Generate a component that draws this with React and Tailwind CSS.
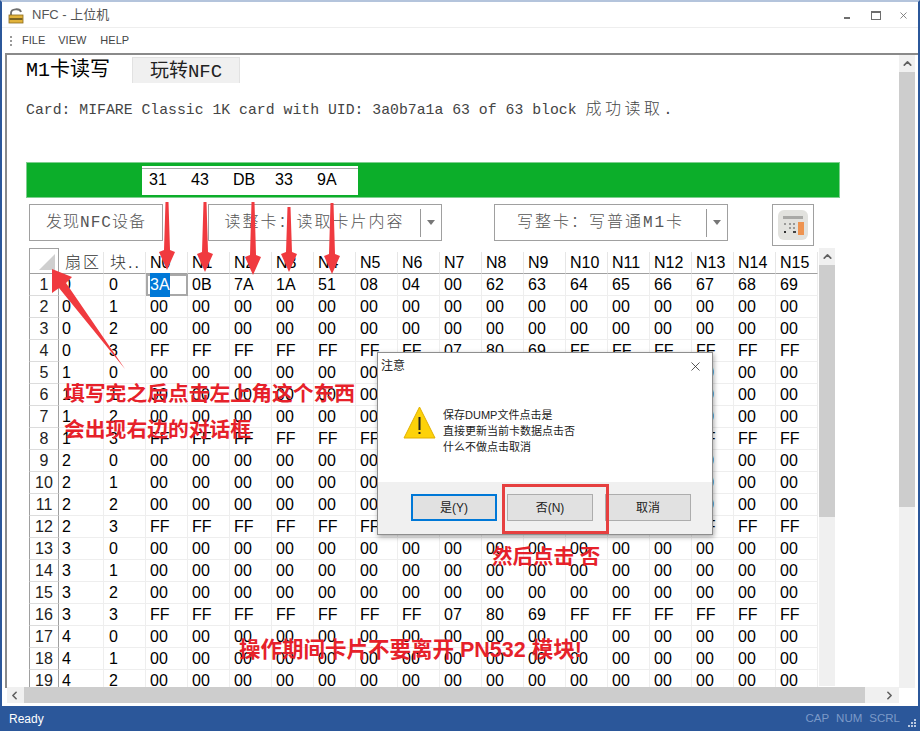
import React from 'react';
import { ChevronUp, ChevronLeft, ChevronRight, X } from 'lucide-react';

const CJK = "font-['Liberation_Sans','Noto_Sans_CJK_SC',sans-serif]";
const MONO = "font-['Liberation_Mono','Noto_Sans_CJK_SC',monospace]";

const COLUMNS = Array.from({ length: 16 }, (_, i) => `N${i}`);
const FIRST_ROW = ['3A', '0B', '7A', '1A', '51', '08', '04', '00', '62', '63', '64', '65', '66', '67', '68', '69'];
const TRAILER = ['FF', 'FF', 'FF', 'FF', 'FF', 'FF', 'FF', '07', '80', '69', 'FF', 'FF', 'FF', 'FF', 'FF', 'FF'];
const EMPTY = Array(16).fill('00');

const ROWS = Array.from({ length: 19 }, (_, i) => ({
  id: i + 1,
  sector: Math.floor(i / 4),
  block: i % 4,
  cells: i === 0 ? FIRST_ROW : i % 4 === 3 ? TRAILER : EMPTY,
}));

const ARROWS = [
  [165, 200, 268],
  [203, 200, 270],
  [251, 200, 273],
  [287, 205, 270],
  [330, 201, 272],
];

const LockIcon = () => (
  <svg width="16" height="17" viewBox="0 0 16 17" className="ml-[6px]">
    <path d="M3 8 V6 C3 1.5 12 1 13 5" fill="none" stroke="#6f6f6f" strokeWidth="1.8" />
    <rect x="1" y="8" width="14" height="8" fill="#e2b33c" stroke="#8a6a1c" strokeWidth="0.8" />
    <rect x="1.5" y="11" width="13" height="2" fill="#7a6322" />
  </svg>
);

const WindowButtons = () => (
  <div className="ml-auto flex items-center text-[#6e6e6e]">
    <div className="mt-[5px] h-[2px] w-[6px] bg-[#6e6e6e]" />
    <div className="ml-[21px] h-[9px] w-[10px] border border-t-2 border-[#6e6e6e]" />
    <X size={11} strokeWidth={1.8} className="ml-[17px] mr-[9px]" />
  </div>
);

const Combo = ({ label, className }) => (
  <div className={`flex h-[37px] w-[234px] items-center border border-[#a0a0a0] bg-white ${className}`}>
    <span className={`flex-1 text-center text-[16px] font-light tracking-[2px] text-[#555] ${MONO}`}>{label}</span>
    <div className="h-[28px] w-px bg-[#999]" />
    <div className="mx-[6px] h-0 w-0 border-x-[4px] border-t-[5px] border-x-transparent border-t-[#777]" />
  </div>
);

const CalcIcon = () => (
  <svg width="30" height="30" viewBox="0 0 30 30">
    <rect width="30" height="30" rx="6" fill="#e2e2de" />
    <rect x="5" y="6" width="20" height="3" fill="#a9a9a6" />
    <rect x="20" y="12" width="6" height="13" fill="#ee9350" />
    <g fill="#9a9a98">
      <rect x="6" y="13" width="2" height="2" />
      <rect x="11" y="13" width="2" height="2" />
      <rect x="15" y="13" width="2" height="2" />
      <rect x="11" y="17" width="2" height="2" />
      <rect x="15" y="17" width="2" height="2" />
    </g>
    <rect x="6" y="21" width="2" height="2" fill="#333" />
    <rect x="15" y="21" width="3" height="2" fill="#444" />
  </svg>
);

const HexGrid = () => (
  <div className="grid h-[440px] w-[789px] grid-cols-[30px_45px_42px_repeat(16,42px)] grid-rows-[26px] auto-rows-[22px] overflow-hidden text-[16px] text-black font-['Liberation_Sans','Noto_Sans_CJK_SC',sans-serif]">
    <div className="relative border border-[#a0a0a0]">
      <div className="absolute bottom-[3px] right-[3px] h-0 w-0 border-b-[16px] border-l-[16px] border-b-[#cfcfcf] border-l-transparent" />
    </div>
    <div className="mt-[4px] flex items-center border-b border-r border-[#a0a0a0] border-r-[#e6e6e6] pl-[6px] font-light tracking-[2px] text-[#333]">扇区</div>
    <div className="mt-[4px] flex items-center border-b border-r border-[#a0a0a0] border-r-[#e6e6e6] pl-[6px] font-light tracking-[2px] text-[#333]">块..</div>
    {COLUMNS.map((name) => (
      <div key={name} className="mt-[4px] flex items-center border-b border-r border-[#a0a0a0] border-r-[#e6e6e6] pl-[4px]">{name}</div>
    ))}
    {ROWS.map((row) => (
      <React.Fragment key={row.id}>
        <div className="flex items-center justify-center border-x border-b border-x-[#a0a0a0] border-b-[#dcdcdc] text-[#222]">{row.id}</div>
        <div className="flex items-center border-b border-r border-[#eeeeee] pl-[3px]">{row.sector}</div>
        <div className="flex items-center border-b border-r border-[#eeeeee] pl-[5px]">{row.block}</div>
        {row.cells.map((value, i) =>
          row.id === 1 && i === 0 ? (
            <div key={i} className="flex items-center border-2 border-[#a8a8a8] pl-[2px]">
              <span className="bg-[#0078d7] text-white">{value}</span>
            </div>
          ) : (
            <div key={i} className="flex items-center border-b border-r border-[#eeeeee] pl-[4px]">{value}</div>
          )
        )}
      </React.Fragment>
    ))}
  </div>
);

const Scrollbar = ({ thumb, className }) => (
  <div className={`flex w-[16px] flex-col bg-[#f0f0f0] ${className}`}>
    <div className="flex h-[17px] items-center justify-center">
      <ChevronUp size={13} strokeWidth={3} className="text-[#606060]" />
    </div>
    <div className={`bg-[#cdcdcd] ${thumb}`} />
  </div>
);

const DialogButton = ({ label, primary }) => (
  <button className={`h-[27px] w-[86px] bg-[#e1e1e1] text-[12px] text-[#222] ${primary ? 'border-2 border-[#0078d7]' : 'border border-[#adadad]'}`}>
    {label}
  </button>
);

const Dialog = () => (
  <div className={`absolute left-[375px] top-[350px] flex h-[183px] w-[336px] flex-col border border-[#8e8e8e] bg-white shadow-[1px_2px_5px_rgba(0,0,0,0.35)] ${CJK}`}>
    <div className="flex h-[26px] items-center justify-between pl-[3px] pr-[9px] text-[12px] text-[#222]">
      注意
      <X size={15} strokeWidth={1.2} className="text-[#222]" />
    </div>
    <div className="flex flex-1 items-start pl-[25px] pt-[27px]">
      <svg width="33" height="33" viewBox="0 0 33 33">
        <path d="M16.5 1 L32 32 H1 Z" fill="#fdd20a" stroke="#e2b100" strokeWidth="1" strokeLinejoin="round" />
        <rect x="15.5" y="11" width="2" height="13" fill="#222" />
        <rect x="15.5" y="26" width="2" height="2" fill="#222" />
      </svg>
      <div className="ml-[7px] mt-[1px] text-[11px] leading-[16px] text-[#222]">
        <div>保存DUMP文件点击是</div>
        <div>直接更新当前卡数据点击否</div>
        <div>什么不做点击取消</div>
      </div>
    </div>
    <div className="flex h-[52px] items-start gap-[10px] bg-[#f0f0f0] pl-[33px] pt-[12px]">
      <DialogButton label="是(Y)" primary />
      <DialogButton label="否(N)" />
      <div className="ml-[2px]">
        <DialogButton label="取消" />
      </div>
    </div>
  </div>
);

const Note = ({ className, children }) => (
  <div className={`absolute whitespace-nowrap font-bold leading-[26px] text-[#e6212a] ${CJK} ${className}`}>{children}</div>
);

const Annotations = () => (
  <>
    <svg width="920" height="731" className="pointer-events-none absolute left-0 top-0">
      <g fill="#f03a3f">
        {ARROWS.map(([x, from, tip]) => (
          <path key={x} d={`M${x - 1.5} ${from} H${x + 1.5} L${x + 3} ${tip - 20} L${x + 8} ${tip - 18} L${x} ${tip} L${x - 8} ${tip - 18} L${x - 3} ${tip - 20} Z`} />
        ))}
        <path d="M50 267 L70 275 L64 281 L123 367 L57 286 L50 291 Z" />
      </g>
    </svg>
    <Note className="left-[62px] top-[379px] text-[20.8px]">填写完之后点击左上角这个东西</Note>
    <Note className="left-[62px] top-[415px] text-[20.8px]">会出现右边的对话框</Note>
    <Note className="left-[490px] top-[542px] text-[20.5px]">然后点击 否</Note>
    <Note className="left-[237px] top-[635px] text-[21.5px]">操作期间卡片不要离开 PN532 模块!</Note>
    <div className="absolute left-[500px] top-[482px] h-[50px] w-[107px] border-[3px] border-[#e64040]" />
  </>
);

export default function App() {
  return (
    <div className="relative flex h-[731px] w-[920px] flex-col overflow-hidden border-x-2 border-t-2 border-x-[#2b579a] border-t-[#b4c4dc] bg-white">
      <div className={`flex h-[26px] items-center border-b border-[#eeeeee] pt-px text-[13px] text-[#555] ${CJK}`}>
        <LockIcon />
        <span className="ml-[8px]">NFC - 上位机</span>
        <WindowButtons />
      </div>

      <div className="flex h-[25px] items-center text-[11px] text-[#444] font-['Liberation_Sans',sans-serif]">
        <div className="ml-[8px] flex flex-col gap-[2px]">
          <div className="h-[2px] w-[2px] bg-[#999]" />
          <div className="h-[2px] w-[2px] bg-[#999]" />
          <div className="h-[2px] w-[2px] bg-[#999]" />
        </div>
        <span className="ml-[10px]">FILE</span>
        <span className="ml-[13px]">VIEW</span>
        <span className="ml-[14px]">HELP</span>
      </div>

      <div className="ml-[3px] flex h-[635px] border-l-2 border-t-2 border-[#8a8a8a]">
        <div className="w-[892px]">
          <div className="flex h-[28px] items-end">
            <div className={`h-[28px] w-[125px] pl-[19px] text-[20px] leading-[32px] text-black ${MONO}`}>M1卡读写</div>
            <div className={`h-[26px] w-[108px] border-x border-t border-[#e2e2e2] bg-[#f0f0f0] text-center text-[19px] leading-[28px] text-[#222] ${MONO}`}>玩转NFC</div>
          </div>

          <div className={`ml-[19px] mt-[17px] h-[20px] text-[14.8px] leading-[20px] text-[#444] ${MONO}`}>
            Card: MIFARE Classic 1K card with UID: 3a0b7a1a 63 of 63 block <span className="text-[16px] font-light tracking-[3.5px]">成功读取</span>.
          </div>

          <div className="ml-[19px] mt-[42px] flex h-[36px] w-[814px] items-center border border-[#7fcf8f] bg-[#0cae2a] pl-[115px]">
            <div className="flex h-[29px] w-[216px] items-center border-y-2 border-white bg-white pl-[3px] text-[16px] text-black font-['Liberation_Sans',sans-serif] shadow-[inset_0_1px_0_#a8a8a8]">
              {['31', '43', 'DB', '33', '9A'].map((value) => (
                <div key={value} className="w-[42px] pl-[4px]">{value}</div>
              ))}
            </div>
          </div>

          <div className="ml-[22px] mt-[6px] flex h-[44px] items-start">
            <div className={`flex h-[37px] w-[134px] items-center justify-center border border-[#a0a0a0] text-[16px] font-light tracking-[1px] text-[#555] ${MONO}`}>发现NFC设备</div>
            <Combo label="读整卡：读取卡片内容" className="ml-[45px]" />
            <Combo label="写整卡：写普通M1卡" className="ml-[52px]" />
            <div className="ml-[44px] flex h-[42px] w-[42px] items-center justify-center border border-[#a0a0a0]">
              <CalcIcon />
            </div>
          </div>

          <div className="ml-[22px] flex h-[440px]">
            <HexGrid />
            <Scrollbar thumb="h-[252px]" className="ml-px h-[438px]" />
          </div>
        </div>

        <Scrollbar thumb="h-[435px]" className="h-[633px]" />
      </div>

      <div className="-mt-px ml-[5px] flex h-[16px] w-[892px] items-center bg-[#f0f0f0]">
        <ChevronLeft size={13} strokeWidth={3} className="ml-[1px] text-[#606060]" />
        <div className="ml-[3px] h-[16px] w-[841px] bg-[#cdcdcd]" />
        <ChevronRight size={13} strokeWidth={3} className="ml-[18px] text-[#606060]" />
      </div>

      <div className="mt-auto flex h-[25px] items-center bg-[#2b579a] pl-[7px] text-[12px] text-white font-['Liberation_Sans',sans-serif]">
        Ready
        <div className="ml-auto flex gap-[7px] text-[11.5px] text-[#7c9ac8]">
          <span>CAP</span>
          <span>NUM</span>
          <span>SCRL</span>
        </div>
        <div className="ml-[8px] mr-[2px] mt-[8px] grid grid-cols-3 gap-[1px]">
          <div className="col-start-3 h-[2px] w-[2px] bg-[#b9c8e0]" />
          <div className="col-start-2 h-[2px] w-[2px] bg-[#b9c8e0]" />
          <div className="h-[2px] w-[2px] bg-[#b9c8e0]" />
          <div className="h-[2px] w-[2px] bg-[#b9c8e0]" />
          <div className="h-[2px] w-[2px] bg-[#b9c8e0]" />
          <div className="h-[2px] w-[2px] bg-[#b9c8e0]" />
        </div>
      </div>

      <Dialog />
      <Annotations />
    </div>
  );
}
